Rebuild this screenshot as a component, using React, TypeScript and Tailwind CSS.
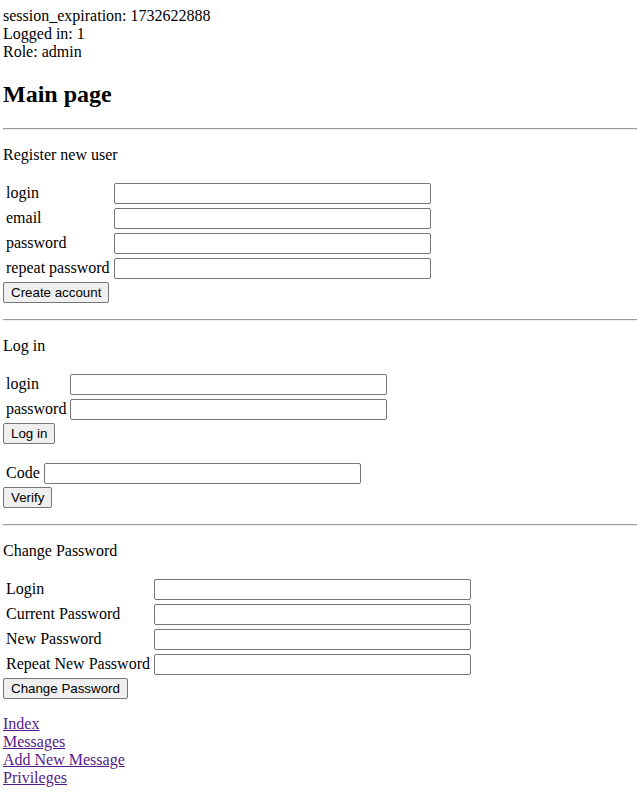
const inputCls =
  "block w-[317px] h-[21px] border border-[#767676] rounded-[2px] bg-white px-[2px] text-[13.33px] font-['Liberation_Sans',sans-serif]"
const btnCls =
  "block h-[21px] px-[7px] border border-[#767676] rounded-[2px] bg-[#efefef] text-[13.33px] leading-[normal] text-black font-['Liberation_Sans',sans-serif]"

function FieldTable({ labels }: { labels: string[] }) {
  return (
    <table className="border-separate border-spacing-[2px]">
      <tbody>
        {labels.map((label) => (
          <tr key={label}>
            <td className="p-px whitespace-nowrap align-middle">{label}</td>
            <td className="p-px align-middle">
              <input type="text" className={inputCls} />
            </td>
          </tr>
        ))}
      </tbody>
    </table>
  )
}

function Rule() {
  return <hr className="my-2 h-0 border-0 border-t border-b border-t-[#9a9a9a] border-b-[#eeeeee]" />
}

export default function App() {
  return (
    <div className="min-h-screen bg-white text-black font-['Liberation_Serif',serif] text-[16px] leading-[normal] pl-[3px] pt-[7px] pb-2">
      <div>session_expiration: 1732622888</div>
      <div>Logged in: 1</div>
      <div>Role: admin</div>

      <h2 className="text-[24px] font-bold leading-[normal] my-[19.92px]">Main page</h2>

      <Rule />
      <p className="my-4">Register new user</p>
      <form className="mb-4">
        <FieldTable labels={["login", "email", "password", "repeat password"]} />
        <button type="button" className={btnCls}>Create account</button>
      </form>

      <Rule />
      <p className="my-4">Log in</p>
      <form className="mb-4">
        <FieldTable labels={["login", "password"]} />
        <button type="button" className={btnCls}>Log in</button>
      </form>
      <form className="mb-4">
        <FieldTable labels={["Code"]} />
        <button type="button" className={btnCls}>Verify</button>
      </form>

      <Rule />
      <p className="my-4">Change Password</p>
      <form className="mb-4">
        <FieldTable labels={["Login", "Current Password", "New Password", "Repeat New Password"]} />
        <button type="button" className={btnCls}>Change Password</button>
      </form>

      <div className="flex flex-col items-start">
        {["Index", "Messages", "Add New Message", "Privileges"].map((l) => (
          <a key={l} href="#" className="text-[#551a8b] underline">
            {l}
          </a>
        ))}
      </div>
    </div>
  )
}
